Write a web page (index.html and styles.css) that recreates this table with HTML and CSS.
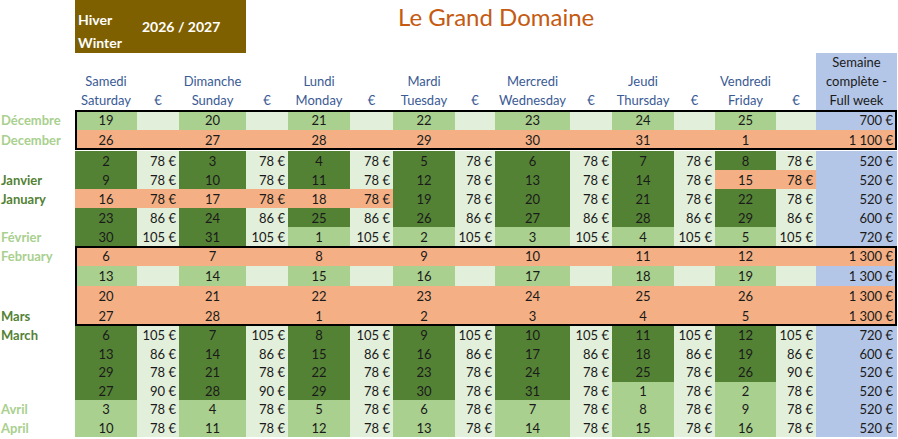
FILE: index.html
```html
<!DOCTYPE html>
<html lang="fr">
<head>
<meta charset="utf-8">
<title>Le Grand Domaine – Hiver 2026 / 2027</title>
<link rel="stylesheet" href="styles.css">
</head>
<body>
<div class="sheet">
  <header class="top">
    <div class="season">
      <div class="season-names"><span>Hiver</span><span>Winter</span></div>
      <div class="season-years">2026 / 2027</div>
    </div>
    <h1 class="title">Le Grand Domaine</h1>
  </header>

  <div class="row head">
    <span class="lab"></span>
    <span class="h"><span>Samedi</span><span>Saturday</span></span>
    <span class="h"><span>€</span></span>
    <span class="h"><span>Dimanche</span><span>Sunday</span></span>
    <span class="h"><span>€</span></span>
    <span class="h"><span>Lundi</span><span>Monday</span></span>
    <span class="h"><span>€</span></span>
    <span class="h"><span>Mardi</span><span>Tuesday</span></span>
    <span class="h"><span>€</span></span>
    <span class="h"><span>Mercredi</span><span>Wednesday</span></span>
    <span class="h"><span>€</span></span>
    <span class="h"><span>Jeudi</span><span>Thursday</span></span>
    <span class="h"><span>€</span></span>
    <span class="h"><span>Vendredi</span><span>Friday</span></span>
    <span class="h"><span>€</span></span>
    <span class="h hw"><span>Semaine</span><span>complète -</span><span>Full week</span></span>
  </div>

  <section class="block boxed tall">
    <div class="row">
      <span class="lab l-lg">Décembre</span>
      <span class="d lg">19</span><span class="p pg"></span>
      <span class="d lg">20</span><span class="p pg"></span>
      <span class="d lg">21</span><span class="p pg"></span>
      <span class="d lg">22</span><span class="p pg"></span>
      <span class="d lg">23</span><span class="p pg"></span>
      <span class="d lg">24</span><span class="p pg"></span>
      <span class="d lg">25</span><span class="p pg"></span>
      <span class="w bl">700 €</span>
    </div>
    <div class="row">
      <span class="lab l-lg">December</span>
      <span class="d sa">26</span><span class="p sa"></span>
      <span class="d sa">27</span><span class="p sa"></span>
      <span class="d sa">28</span><span class="p sa"></span>
      <span class="d sa">29</span><span class="p sa"></span>
      <span class="d sa">30</span><span class="p sa"></span>
      <span class="d sa">31</span><span class="p sa"></span>
      <span class="d sa">1</span><span class="p sa"></span>
      <span class="w sa">1 100 €</span>
    </div>
  </section>

  <section class="block jan">
    <div class="row">
      <span class="lab"></span>
      <span class="d dg">2</span><span class="p pg">78 €</span>
      <span class="d dg">3</span><span class="p pg">78 €</span>
      <span class="d dg">4</span><span class="p pg">78 €</span>
      <span class="d dg">5</span><span class="p pg">78 €</span>
      <span class="d dg">6</span><span class="p pg">78 €</span>
      <span class="d dg">7</span><span class="p pg">78 €</span>
      <span class="d dg">8</span><span class="p pg">78 €</span>
      <span class="w bl">520 €</span>
    </div>
    <div class="row">
      <span class="lab l-dg">Janvier</span>
      <span class="d dg">9</span><span class="p pg">78 €</span>
      <span class="d dg">10</span><span class="p pg">78 €</span>
      <span class="d dg">11</span><span class="p pg">78 €</span>
      <span class="d dg">12</span><span class="p pg">78 €</span>
      <span class="d dg">13</span><span class="p pg">78 €</span>
      <span class="d dg">14</span><span class="p pg">78 €</span>
      <span class="d sa">15</span><span class="p sa">78 €</span>
      <span class="w bl">520 €</span>
    </div>
    <div class="row">
      <span class="lab l-dg">January</span>
      <span class="d sa">16</span><span class="p sa">78 €</span>
      <span class="d sa">17</span><span class="p sa">78 €</span>
      <span class="d sa">18</span><span class="p sa">78 €</span>
      <span class="d dg">19</span><span class="p pg">78 €</span>
      <span class="d dg">20</span><span class="p pg">78 €</span>
      <span class="d dg">21</span><span class="p pg">78 €</span>
      <span class="d dg">22</span><span class="p pg">78 €</span>
      <span class="w bl">520 €</span>
    </div>
    <div class="row">
      <span class="lab"></span>
      <span class="d dg">23</span><span class="p pg">86 €</span>
      <span class="d dg">24</span><span class="p pg">86 €</span>
      <span class="d dg">25</span><span class="p pg">86 €</span>
      <span class="d dg">26</span><span class="p pg">86 €</span>
      <span class="d dg">27</span><span class="p pg">86 €</span>
      <span class="d dg">28</span><span class="p pg">86 €</span>
      <span class="d dg">29</span><span class="p pg">86 €</span>
      <span class="w bl">600 €</span>
    </div>
    <div class="row">
      <span class="lab l-lg">Février</span>
      <span class="d dg">30</span><span class="p pg">105 €</span>
      <span class="d dg">31</span><span class="p pg">105 €</span>
      <span class="d lg">1</span><span class="p pg">105 €</span>
      <span class="d lg">2</span><span class="p pg">105 €</span>
      <span class="d lg">3</span><span class="p pg">105 €</span>
      <span class="d lg">4</span><span class="p pg">105 €</span>
      <span class="d lg">5</span><span class="p pg">105 €</span>
      <span class="w bl">720 €</span>
    </div>
  </section>

  <section class="block boxed tall">
    <div class="row">
      <span class="lab l-lg">February</span>
      <span class="d sa">6</span><span class="p sa"></span>
      <span class="d sa">7</span><span class="p sa"></span>
      <span class="d sa">8</span><span class="p sa"></span>
      <span class="d sa">9</span><span class="p sa"></span>
      <span class="d sa">10</span><span class="p sa"></span>
      <span class="d sa">11</span><span class="p sa"></span>
      <span class="d sa">12</span><span class="p sa"></span>
      <span class="w sa">1 300 €</span>
    </div>
    <div class="row">
      <span class="lab"></span>
      <span class="d lg">13</span><span class="p pg"></span>
      <span class="d lg">14</span><span class="p pg"></span>
      <span class="d lg">15</span><span class="p pg"></span>
      <span class="d lg">16</span><span class="p pg"></span>
      <span class="d lg">17</span><span class="p pg"></span>
      <span class="d lg">18</span><span class="p pg"></span>
      <span class="d lg">19</span><span class="p pg"></span>
      <span class="w bl">1 300 €</span>
    </div>
    <div class="row">
      <span class="lab"></span>
      <span class="d sa">20</span><span class="p sa"></span>
      <span class="d sa">21</span><span class="p sa"></span>
      <span class="d sa">22</span><span class="p sa"></span>
      <span class="d sa">23</span><span class="p sa"></span>
      <span class="d sa">24</span><span class="p sa"></span>
      <span class="d sa">25</span><span class="p sa"></span>
      <span class="d sa">26</span><span class="p sa"></span>
      <span class="w sa">1 300 €</span>
    </div>
    <div class="row">
      <span class="lab l-dg">Mars</span>
      <span class="d sa">27</span><span class="p sa"></span>
      <span class="d sa">28</span><span class="p sa"></span>
      <span class="d sa">1</span><span class="p sa"></span>
      <span class="d sa">2</span><span class="p sa"></span>
      <span class="d sa">3</span><span class="p sa"></span>
      <span class="d sa">4</span><span class="p sa"></span>
      <span class="d sa">5</span><span class="p sa"></span>
      <span class="w sa">1 300 €</span>
    </div>
  </section>

  <section class="block mar">
    <div class="row">
      <span class="lab l-dg">March</span>
      <span class="d dg">6</span><span class="p pg">105 €</span>
      <span class="d dg">7</span><span class="p pg">105 €</span>
      <span class="d dg">8</span><span class="p pg">105 €</span>
      <span class="d dg">9</span><span class="p pg">105 €</span>
      <span class="d dg">10</span><span class="p pg">105 €</span>
      <span class="d dg">11</span><span class="p pg">105 €</span>
      <span class="d dg">12</span><span class="p pg">105 €</span>
      <span class="w bl">720 €</span>
    </div>
    <div class="row">
      <span class="lab"></span>
      <span class="d dg">13</span><span class="p pg">86 €</span>
      <span class="d dg">14</span><span class="p pg">86 €</span>
      <span class="d dg">15</span><span class="p pg">86 €</span>
      <span class="d dg">16</span><span class="p pg">86 €</span>
      <span class="d dg">17</span><span class="p pg">86 €</span>
      <span class="d dg">18</span><span class="p pg">86 €</span>
      <span class="d dg">19</span><span class="p pg">86 €</span>
      <span class="w bl">600 €</span>
    </div>
    <div class="row">
      <span class="lab"></span>
      <span class="d dg">29</span><span class="p pg">78 €</span>
      <span class="d dg">21</span><span class="p pg">78 €</span>
      <span class="d dg">22</span><span class="p pg">78 €</span>
      <span class="d dg">23</span><span class="p pg">78 €</span>
      <span class="d dg">24</span><span class="p pg">78 €</span>
      <span class="d dg">25</span><span class="p pg">78 €</span>
      <span class="d dg">26</span><span class="p pg">90 €</span>
      <span class="w bl">520 €</span>
    </div>
    <div class="row">
      <span class="lab"></span>
      <span class="d dg">27</span><span class="p pg">90 €</span>
      <span class="d dg">28</span><span class="p pg">90 €</span>
      <span class="d dg">29</span><span class="p pg">78 €</span>
      <span class="d dg">30</span><span class="p pg">78 €</span>
      <span class="d dg">31</span><span class="p pg">78 €</span>
      <span class="d lg">1</span><span class="p pg">78 €</span>
      <span class="d lg">2</span><span class="p pg">78 €</span>
      <span class="w bl">520 €</span>
    </div>
    <div class="row">
      <span class="lab l-lg">Avril</span>
      <span class="d lg">3</span><span class="p pg">78 €</span>
      <span class="d lg">4</span><span class="p pg">78 €</span>
      <span class="d lg">5</span><span class="p pg">78 €</span>
      <span class="d lg">6</span><span class="p pg">78 €</span>
      <span class="d lg">7</span><span class="p pg">78 €</span>
      <span class="d lg">8</span><span class="p pg">78 €</span>
      <span class="d lg">9</span><span class="p pg">78 €</span>
      <span class="w bl">520 €</span>
    </div>
    <div class="row">
      <span class="lab l-lg">April</span>
      <span class="d lg">10</span><span class="p pg">78 €</span>
      <span class="d lg">11</span><span class="p pg">78 €</span>
      <span class="d lg">12</span><span class="p pg">78 €</span>
      <span class="d lg">13</span><span class="p pg">78 €</span>
      <span class="d lg">14</span><span class="p pg">78 €</span>
      <span class="d lg">15</span><span class="p pg">78 €</span>
      <span class="d lg">16</span><span class="p pg">78 €</span>
      <span class="w bl">520 €</span>
    </div>
  </section>
</div>
</body>
</html>
```

FILE: styles.css
```css
:root {
  --cols: 75px 62px 42px 67px 42px 62px 43px 62px 40px 75px 42px 62px 41px 61px 40px 81px;
  --dark-green: #548235;
  --light-green: #a9d08e;
  --pale-green: #e2efda;
  --salmon: #f4b084;
  --blue: #b4c6e7;
  --brown: #7f6000;
  --head-blue: #3a5a94;
}

html, body {
  margin: 0;
  padding: 0;
  background: #fff;
}

body {
  font-family: Lato, "Open Sans", "Liberation Sans", sans-serif;
  font-size: 13px;
  color: #1a1a1a;
}

.sheet {
  width: 898px;
}

/* ---------- top band ---------- */
.top {
  display: flex;
  align-items: flex-start;
  height: 53px;
  padding-left: 75px;
}

.season {
  display: flex;
  width: 171px;
  height: 53px;
  background: var(--brown);
  color: #fff;
  font-weight: 700;
  font-size: 14px;
}

.season-names {
  display: flex;
  flex-direction: column;
  width: 62px;
  padding: 8px 0 0 3px;
  line-height: 23px;
}

.season-years {
  align-self: center;
  padding-left: 2px;
  padding-bottom: 1px;
}

.title {
  margin: 0 0 0 152px;
  font-size: 24px;
  font-weight: 400;
  line-height: 34px;
  color: #c55a11;
  white-space: nowrap;
}

/* ---------- grid rows ---------- */
.row {
  display: grid;
  grid-template-columns: var(--cols);
  height: 19px;
}

.row > span {
  display: flex;
  align-items: center;
  white-space: nowrap;
  overflow: hidden;
}

.head {
  height: 57px;
}

.head > .h {
  flex-direction: column;
  justify-content: flex-end;
  align-items: center;
  color: var(--head-blue);
  line-height: 19px;
}

.head > .hw {
  background: var(--blue);
  color: #1a1a1a;
}

.lab {
  font-weight: 700;
  padding-left: 1px;
}

.l-lg { color: var(--light-green); }
.l-dg { color: var(--dark-green); }

.d { justify-content: center; }
.p { justify-content: flex-end; padding-right: 3px; }
.w { justify-content: flex-end; padding-right: 4px; }

.dg { background: var(--dark-green); }
.lg { background: var(--light-green); }
.pg { background: var(--pale-green); }
.sa { background: var(--salmon); }
.bl { background: var(--blue); }

/* ---------- blocks ---------- */
.block {
  position: relative;
}

.block.boxed::after {
  content: "";
  position: absolute;
  top: 0;
  bottom: 0;
  left: 75px;
  right: 1px;
  border: 2px solid #000;
  pointer-events: none;
}

.block.tall .row { height: 20px; }

.block.jan {
  margin-top: 1px;
}

.block.mar .row { height: 18.5px; }
```
